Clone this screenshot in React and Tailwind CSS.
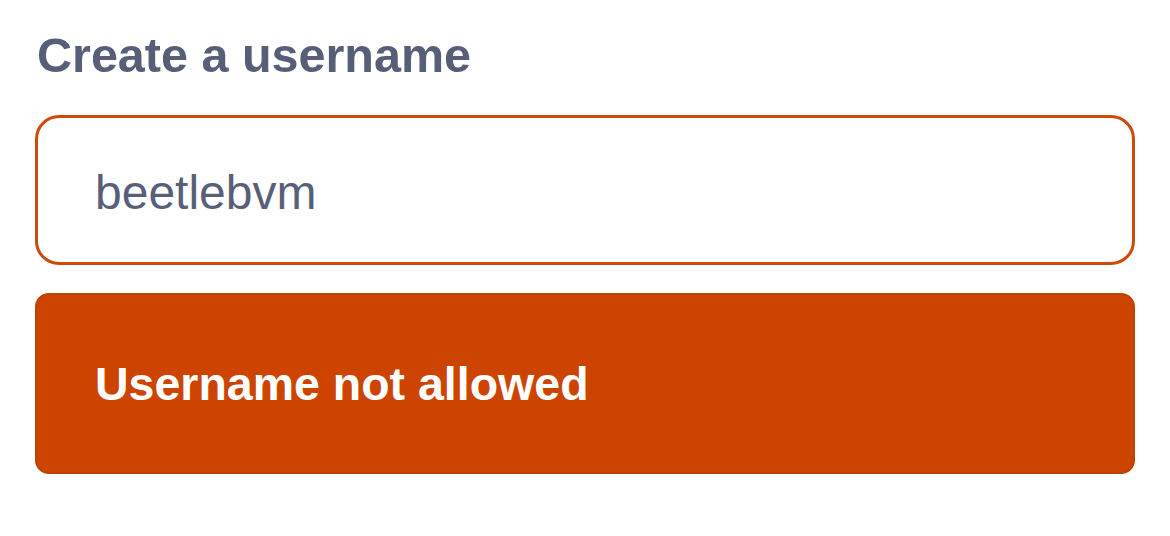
import { useState } from "react";

const App = () => {
  const [username, setUsername] = useState("beetlebvm");

  return (
    <div className="w-[1170px] h-[536px] bg-white px-[35px] pt-[31px] font-['Liberation_Sans',Arial,sans-serif]">
      <h1 className="text-[48.5px] leading-[48px] font-bold text-[#575e78] pl-[2px]">
        Create a username
      </h1>

      <div className="mt-[36px] h-[150px] rounded-[24px] border-[3px] border-[#cc4a0a] bg-white flex items-center pl-[57px] pt-[5px]">
        <input
          value={username}
          onChange={e => setUsername(e.target.value)}
          className="w-full text-[48px] leading-[48px] text-[#595f79] outline-none bg-transparent"
          type="text"
        />
      </div>

      <div className="mt-[28px] h-[181px] rounded-[14px] bg-[#cc4400] border-2 border-[#bf4204] flex items-center pl-[58px]">
        <span className="text-white text-[46.5px] leading-[48px] font-bold">
          Username not allowed
        </span>
      </div>
    </div>
  );
};

export default App;
